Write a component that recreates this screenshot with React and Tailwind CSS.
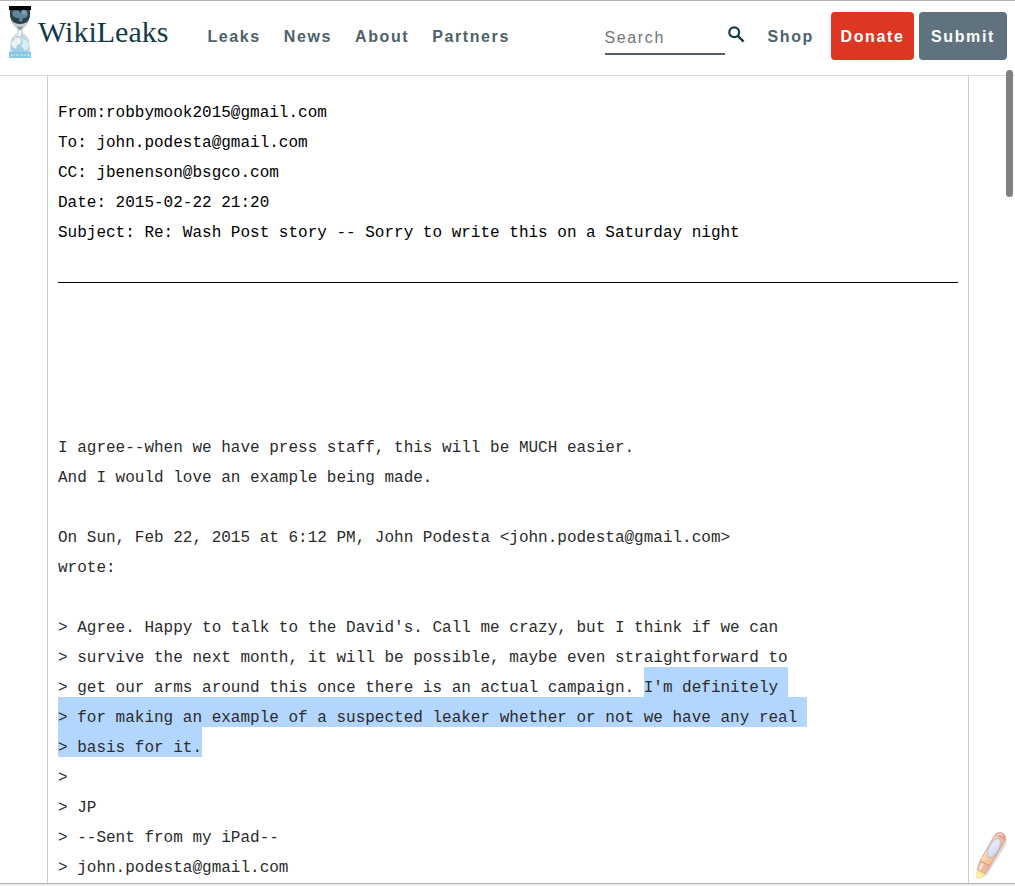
import { useState } from "react";

const navLinks = ["Leaks", "News", "About", "Partners"];

const headerFields = [
  "From:robbymook2015@gmail.com",
  "To: john.podesta@gmail.com",
  "CC: jbenenson@bsgco.com",
  "Date: 2015-02-22 21:20",
  "Subject: Re: Wash Post story -- Sorry to write this on a Saturday night",
];

const bodyStart = `I agree--when we have press staff, this will be MUCH easier.
And I would love an example being made.

On Sun, Feb 22, 2015 at 6:12 PM, John Podesta <john.podesta@gmail.com>
wrote:

> Agree. Happy to talk to the David's. Call me crazy, but I think if we can
> survive the next month, it will be possible, maybe even straightforward to
> get our arms around this once there is an actual campaign. `;

const highlighted = `I'm definitely 
> for making an example of a suspected leaker whether or not we have any real 
> basis for it.`;

const bodyEnd = `
>
> JP
> --Sent from my iPad--
> john.podesta@gmail.com`;

function HourglassLogo() {
  return (
    <svg width="22" height="52" viewBox="0 0 22 52" aria-hidden="true">
      <defs>
        <linearGradient id="glass" x1="0" y1="0" x2="0" y2="1">
          <stop offset="0" stopColor="#8d979c" />
          <stop offset="0.45" stopColor="#d3d6d8" />
          <stop offset="0.7" stopColor="#e6ebee" />
          <stop offset="1" stopColor="#b5dcec" />
        </linearGradient>
        <linearGradient id="globe" x1="0" y1="0" x2="0" y2="1">
          <stop offset="0" stopColor="#c3dbe6" />
          <stop offset="1" stopColor="#93cbe2" />
        </linearGradient>
      </defs>
      {/* glass */}
      <path d="M1 4h20c0 9-1 13-6 18-2 2-2 4 0 6 5 4 6 9 6 19H1c0-10 1-15 6-19 2-2 2-4 0-6C2 17 1 13 1 4z" fill="url(#glass)" />
      {/* dark globe */}
      <path d="M0 0h22v4H0z" fill="#030505" />
      <path d="M1 4h20v5c0 5-4 9-10 9S1 14 1 9z" fill="#2b4049" />
      <path d="M3 6l3-2 4 1 1 2 3-3 4 1 1 4-2 3-3 0-1 4-3-1 0-3-3 0-3-2z" fill="#5e8698" />
      <path d="M13 4l3 0 2 2-2 3-3-1z" fill="#7ba3b3" />
      {/* sand running through the neck */}
      <path d="M5 17c2 2 4 2 6 2s4 0 6-2c-1 3-3 4-4 6H9c-1-2-3-3-4-6z" fill="#c9ced1" />
      <path d="M8 20l3 1 3-1-2 4h-2z" fill="#8b959a" />
      <path d="M11 23c1 3 2 5 2 8 0 2-4 2-4 0 0-3 1-5 2-8z" fill="#fafbfb" />
      <path d="M12 26l2 5-1 2z" fill="#858f95" />
      <path d="M7 28c-2 2-4 4-5 7M15 28c2 2 4 4 5 7" stroke="#bbc2c6" strokeWidth="0.8" fill="none" />
      {/* light globe */}
      <circle cx="11" cy="39" r="9.5" fill="url(#globe)" />
      <path d="M3 36l4-4 4 0 1 3-1 3-3 1-1 4-3-2-2-3z" fill="#edf4f8" />
      <path d="M13 33l4 1 3 4-1 5-3 2-2-3-2-2 2-3z" fill="#dcecf4" />
      <path d="M0 46h22v6H0z" fill="#86c8e1" />
      <path d="M2 49h2m1 0h1m1 0h2m1 0h1m1 0h2m1 0h2m1 0h3" stroke="#b5dcec" strokeWidth="2" />
    </svg>
  );
}

function SearchIcon() {
  return (
    <svg width="17" height="17" viewBox="0 0 17 17" fill="none" stroke="#123c48" aria-hidden="true">
      <circle cx="6.2" cy="6.2" r="4.9" strokeWidth="2.2" />
      <path d="M9.8 9.8L15.600 15.600" strokeWidth="2.4" />
    </svg>
  );
}

function Marker() {
  return (
    <svg width="34" height="50" viewBox="0 0 34 50" aria-hidden="true">
      <defs>
        <linearGradient id="barrel" x1="0.2" y1="0.2" x2="0.8" y2="0.6">
          <stop offset="0" stopColor="#fceee2" />
          <stop offset="0.5" stopColor="#f9cfa0" />
          <stop offset="1" stopColor="#f0b67f" />
        </linearGradient>
        <linearGradient id="window" x1="0" y1="0" x2="1" y2="1">
          <stop offset="0" stopColor="#eef0fc" />
          <stop offset="1" stopColor="#cfd5f0" />
        </linearGradient>
      </defs>
      <path d="M7 48l7-5 4-7 14-22 1-6-3 0-22 35z" fill="#dcdde1" />
      <path d="M6 30L19 7c3-5 5-6 9-5 4 2 4 5 2 9L16 35z" fill="url(#barrel)" stroke="#cf9489" strokeWidth="0.8" />
      <path d="M21 5c2-4 5-4 8-3 3 2 3 5 1 8-2-3-5-5-9-5z" fill="#e3a199" />
      <path d="M23 4c2-1 4-1 6 0" stroke="#f9dcd6" strokeWidth="1.5" fill="none" />
      <path d="M6 30l10 5-5 8-8-4z" fill="#efb7a0" stroke="#d08f80" strokeWidth="0.7" />
      <path d="M7 32l3 1-3 6-3-1z" fill="#fce0d2" />
      <path d="M3 39l8 4-4 4c-3 2-6 0-5-4z" fill="#f5ea9a" />
      <path d="M3 43l4 3" stroke="#fffbd6" strokeWidth="1.2" />
      <ellipse cx="20" cy="17" rx="4.8" ry="10.500" transform="rotate(28 20 17)" fill="url(#window)" stroke="#b9bbd6" />
    </svg>
  );
}

function Header() {
  const [query, setQuery] = useState("");

  return (
    <header className="flex items-start justify-between border-t border-b border-t-[#b1b1b1] border-b-[#dadada] pl-[9px] pr-2 font-['Liberation_Sans',Arial,sans-serif] text-base tracking-widest text-[#4e616b]">
      <div className="flex items-start">
        <a href="#" className="mt-[5px] flex gap-[7px]">
          <HourglassLogo />
          <span className="mt-2 font-['Liberation_Serif',serif] text-[30px] leading-9 tracking-normal text-[#123c48]">
            WikiLeaks
          </span>
        </a>
        <nav className="mt-3 ml-[39px] flex h-12 items-center gap-[23px] font-bold">
          {navLinks.map((link) => (
            <a key={link} href="#">
              {link}
            </a>
          ))}
        </nav>
      </div>

      <div className="mt-[11px] mb-[15px] flex items-center">
        <form className="flex items-center gap-[3px]" onSubmit={(e) => e.preventDefault()}>
          <input
            type="text"
            aria-label="Search"
            placeholder="Search"
            value={query}
            onChange={(e) => setQuery(e.target.value)}
            className="mt-1 h-[34px] w-[120px] border-b-2 border-[#4e616b] pt-0.5 tracking-widest outline-none placeholder:text-[#757575]"
          />
          <button type="submit" aria-label="Search" className="mb-1">
            <SearchIcon />
          </button>
        </form>
        <a href="#" className="ml-[23px] pt-0.5 font-bold">
          Shop
        </a>
        <button className="ml-[17px] h-12 w-[83px] rounded bg-[#dd3723] pt-0.5 font-bold tracking-widest text-white">
          Donate
        </button>
        <button className="ml-[5px] h-12 w-[88px] rounded bg-[#5f727e] pt-0.5 font-bold tracking-widest text-white">
          Submit
        </button>
      </div>
    </header>
  );
}

function App() {
  return (
    <div className="relative border-b-2 border-[#eeeeee] bg-white">
      <Header />

      <main className="mr-[46px] ml-[47px] border-x border-[#cccccc] px-2.5 pt-[22px] font-['Liberation_Mono','Courier_New',monospace] text-base leading-[30px] text-black">
        {headerFields.map((field) => (
          <p key={field}>{field}</p>
        ))}

        <hr className="mt-[34px] mb-[150px] border-black" />

        <p className="whitespace-pre-wrap text-[#2b2b2b]">
          {bodyStart}
          <mark className="bg-[#b3d6fe] pt-3 text-[#2b2b2b]">{highlighted}</mark>
          {bodyEnd}
        </p>
      </main>
      <div className="h-px bg-[#b1b1b1]" />

      {/* scroll thumb and marker float over the page */}
      <div className="absolute top-[70px] right-0.5 h-[127px] w-[7px] rounded-full bg-[#808080]" />
      <div className="absolute right-[7px] bottom-[3px]">
        <Marker />
      </div>
    </div>
  );
}

export default App;
